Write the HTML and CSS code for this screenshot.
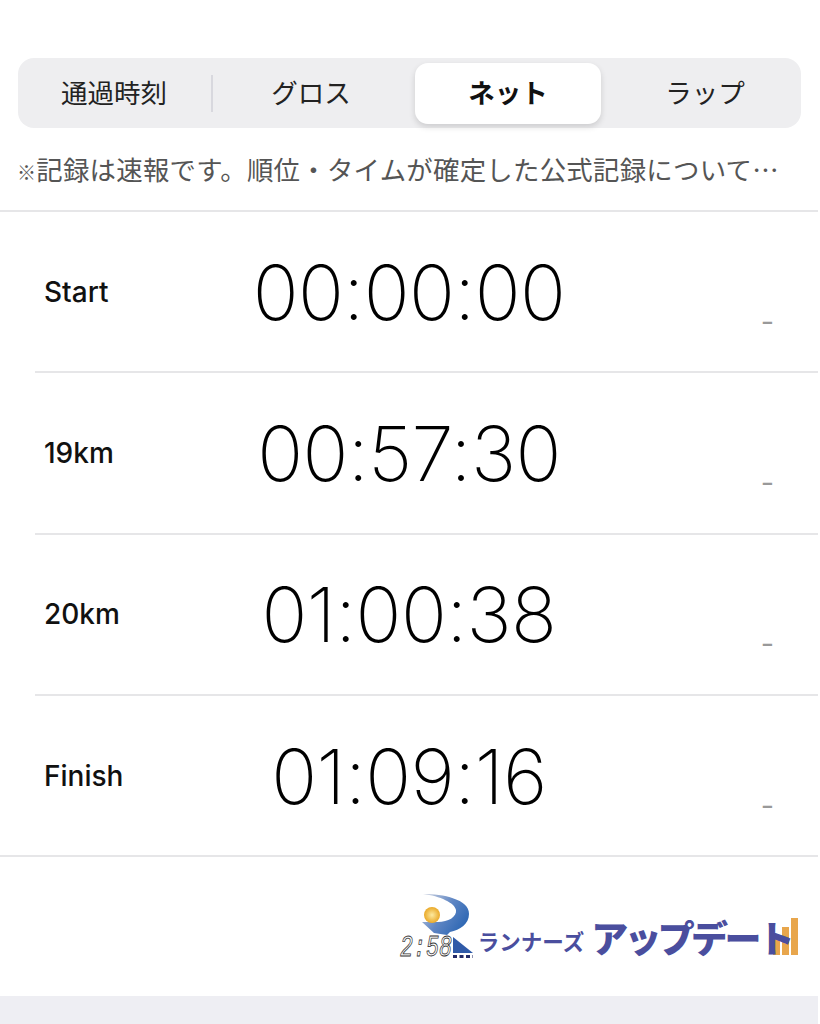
FILE: index.html
```html
<!DOCTYPE html>
<html lang="ja">
<head>
    <meta charset="UTF-8">
    <meta name="viewport" content="width=device-width, initial-scale=1.0">
    <title>ランナーズアップデート</title>
    <link rel="stylesheet" href="styles.css">
</head>
<body>
    <div class="page">
        <div class="tabs">
            <div class="tab tab-first">通過時刻</div>
            <div class="tab tab-second">グロス</div>
            <div class="tab tab-active">ネット</div>
            <div class="tab tab-last">ラップ</div>
        </div>
        <p class="note"><span class="note-mark">※</span>記録は速報です。順位・タイムが確定した公式記録について…</p>

        <div class="splits">
            <div class="split">
                <div class="split-label">Start</div>
                <div class="split-time">00:00:00</div>
                <div class="split-dash">-</div>
            </div>
            <div class="split">
                <div class="split-label">19km</div>
                <div class="split-time">00:57:30</div>
                <div class="split-dash">-</div>
            </div>
            <div class="split">
                <div class="split-label">20km</div>
                <div class="split-time">01:00:38</div>
                <div class="split-dash">-</div>
            </div>
            <div class="split">
                <div class="split-label">Finish</div>
                <div class="split-time">01:09:16</div>
                <div class="split-dash">-</div>
            </div>
        </div>

        <div class="logo-row">
            <div class="logo">
                <svg class="logo-mark" width="76" height="78" viewBox="0 0 76 78">
                    <defs>
                        <linearGradient id="swoosh" x1="0" y1="0" x2="1" y2="0.6">
                            <stop offset="0" stop-color="#d5d8e2"/>
                            <stop offset="0.55" stop-color="#5f86c4"/>
                            <stop offset="1" stop-color="#2f68b4"/>
                        </linearGradient>
                        <radialGradient id="sun">
                            <stop offset="0" stop-color="#fdeaa0"/>
                            <stop offset="1" stop-color="#eaa928"/>
                        </radialGradient>
                    </defs>
                    <path d="M25 4 C45 4 71 9 71 24 C71 34 62 40 52 42 L49 45 L36 43 L24 32 L40 32 C50 32 59 27 58 20 C57 13 42 6 25 4 Z" fill="url(#swoosh)"/>
                    <circle cx="34" cy="25" r="8" fill="url(#sun)"/>
                    <path d="M55 47 L75 63 L55 63 Z" fill="#2f5aa8"/>
                    <path d="M55 66.5 H75" stroke="#222a66" stroke-width="3" stroke-dasharray="4 2.5"/>
                    <text class="logo-digits" x="2" y="66" textLength="52" lengthAdjust="spacingAndGlyphs">2:58</text>
                </svg>
                <span class="logo-small">ランナーズ</span>
                <span class="logo-big">アップデート</span>
                <div class="logo-bars">
                    <i class="bar bar-1"></i>
                    <i class="bar bar-2"></i>
                    <i class="bar bar-3"></i>
                </div>
            </div>
        </div>

        <div class="footer-band"></div>
    </div>
</body>
</html>
```

FILE: styles.css
```css
body {
    margin: 0;
    background: white;
    font-family: Inter, "Noto Sans CJK JP", sans-serif;
}

.page {
    width: 818px;
    height: 1024px;
    padding-top: 58px;
    box-sizing: border-box;
    overflow: hidden;
}

.tabs {
    display: grid;
    grid-template-columns: 195px 202px 186px 200px;
    grid-template-rows: 61px;
    height: 70px;
    margin-left: 18px;
    width: 783px;
    padding: 5px 0 4px;
    box-sizing: border-box;
    background-color: #eeeef0;
    border-radius: 16px;
}

.tab {
    display: flex;
    align-items: center;
    justify-content: center;
    padding-bottom: 4px;
    box-sizing: border-box;
    font-family: "Noto Sans CJK JP", sans-serif;
    font-size: 26.5px;
    line-height: 30px;
    color: #222;
}

.tab-first {
    border-right: 2px solid #d8d8de;
    margin: 12px 0 12px;
    padding-right: 1px;
}

.tab-second {
    padding-right: 6px;
}

.tab-active {
    background: white;
    border-radius: 13px;
    font-weight: 700;
    color: #111;
    box-shadow: 0 3px 6px rgba(0, 0, 0, 0.14);
}

.tab-last {
    padding-left: 8px;
}

.note {
    margin: 0;
    height: 84px;
    padding: 25px 0 0 17px;
    box-sizing: border-box;
    font-family: "Noto Sans CJK JP", sans-serif;
    font-size: 26.4px;
    letter-spacing: 0.27px;
    line-height: 32px;
    color: #555;
    white-space: nowrap;
    border-bottom: 2px solid #e6e6e8;
}

.note-mark {
    font-size: 19px;
}

.split {
    display: grid;
    grid-template-columns: 1fr auto 1fr;
    align-items: center;
    height: 161.3px;
    margin-left: 35px;
    padding: 0 44px 0 9px;
    box-sizing: border-box;
    border-bottom: 2px solid #e6e6e8;
}

.split:last-child {
    margin-left: 0;
    padding-left: 44px;
}

.split-label {
    font-size: 28px;
    font-weight: 500;
    color: #111;
}

.split-time {
    font-size: 76px;
    font-weight: 150;
    letter-spacing: -0.6px;
    color: #000;
}

.split-dash {
    justify-self: end;
    margin-top: 60px;
    font-size: 29px;
    line-height: 34px;
    color: #999;
}

.logo-row {
    display: flex;
    justify-content: flex-end;
    height: 139px;
    padding: 33px 20px 0 0;
    box-sizing: border-box;
}

.logo {
    display: flex;
    align-items: flex-end;
    height: 70px;
    color: #4a4e9e;
    font-family: "Noto Sans CJK JP", sans-serif;
}

.logo-mark {
    display: block;
    margin-bottom: -8px;
}

.logo-digits {
    font-family: "Liberation Mono", monospace;
    font-size: 30px;
    font-style: italic;
    fill: white;
    stroke: #333;
    stroke-width: 0.9;
}

.logo-small {
    font-size: 21.5px;
    font-weight: 700;
    line-height: 26px;
    margin: 0 7px 6px 4px;
    white-space: nowrap;
}

.logo-big {
    position: relative;
    z-index: 1;
    font-size: 37px;
    font-weight: 900;
    letter-spacing: -3.7px;
    line-height: 44px;
    margin-bottom: 1px;
    white-space: nowrap;
}

.logo-bars {
    display: flex;
    align-items: flex-end;
    gap: 2px;
    height: 37px;
    margin: 0 0 5px -18px;
}

.bar {
    display: block;
    width: 7px;
    background-color: #e8a64c;
}

.bar-1 {
    height: 18px;
}

.bar-2 {
    height: 28px;
}

.bar-3 {
    height: 37px;
}

.footer-band {
    height: 28px;
    background-color: #eeeef3;
}
```
